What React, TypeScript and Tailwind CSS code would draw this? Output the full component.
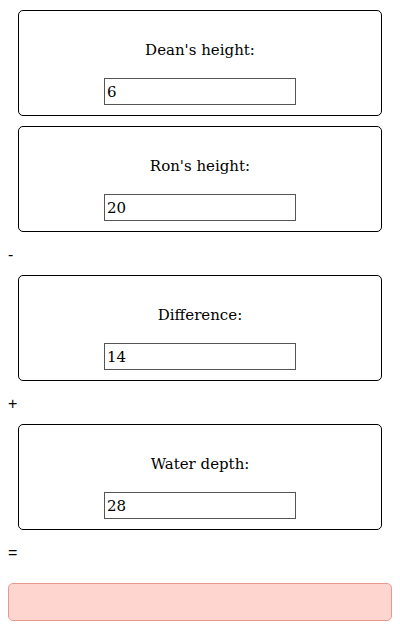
const fields = [
  { label: "Dean's height:", value: '6', op: '' },
  { label: "Ron's height:", value: '20', op: '-' },
  { label: 'Difference:', value: '14', op: '+' },
  { label: 'Water depth:', value: '28', op: '=' },
]

function Field({ label, value }: { label: string; value: string }) {
  return (
    <div className="mx-[10px] flex h-[106px] flex-col items-center rounded-[5px] border border-black pt-[29px]">
      <div className="h-[20px] text-[15px] leading-[20px] text-black">{label}</div>
      <input
        readOnly
        value={value}
        className="mt-[18px] h-[27px] w-[192px] border border-[#555] px-[2px] text-[15px] text-black outline-none"
        style={{ fontFamily: 'inherit' }}
      />
    </div>
  )
}

export default function App() {
  return (
    <div className="bg-white px-[8px] pt-[10px] pb-[8px]" style={{ fontFamily: '"DejaVu Serif", serif' }}>
      {fields.map((f, i) => (
        <div key={i}>
          <Field label={f.label} value={f.value} />
          {f.op ? (
            <div className="my-[10px] h-[23px] text-[16px] leading-[26px] text-black" style={{ fontFamily: '"Liberation Sans", sans-serif' }}>
              {f.op}
            </div>
          ) : (
            <div className="h-[10px]" />
          )}
        </div>
      ))}
      <div className="mt-[20px] h-[38px] rounded-[5px] border border-[#e8998f] bg-[#ffd5d0]" />
    </div>
  )
}
